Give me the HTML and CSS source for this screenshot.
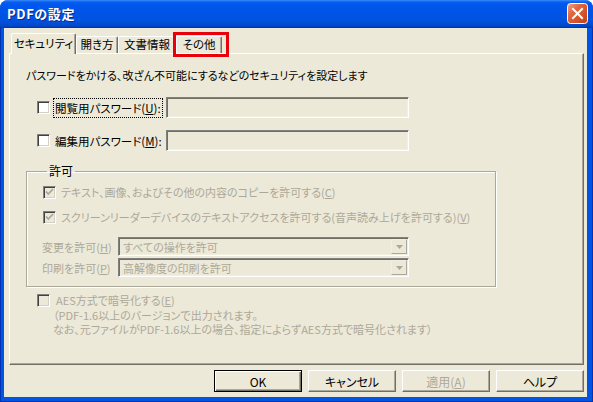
FILE: index.html
```html
<!DOCTYPE html>
<html lang="ja">
<head>
<meta charset="utf-8">
<title>PDFの設定</title>
<link rel="stylesheet" href="styles.css">
</head>
<body>
<div class="window">
  <div class="titlebar">
    <span class="title">PDFの設定</span>
    <span class="close">
      <svg width="21" height="21" viewBox="0 0 21 21">
        <defs>
          <linearGradient id="cg" x1="0" y1="0" x2="1" y2="1">
            <stop offset="0" stop-color="#f0a58c"/>
            <stop offset="0.35" stop-color="#e2663e"/>
            <stop offset="1" stop-color="#c23d16"/>
          </linearGradient>
        </defs>
        <rect x="0.5" y="0.5" width="20" height="20" rx="3" fill="url(#cg)" stroke="#fff"/>
        <path d="M6 6 L15 15 M15 6 L6 15" stroke="#fff" stroke-width="2" stroke-linecap="square"/>
      </svg>
    </span>
  </div>
  <div class="frame">
    <div class="client">
      <div class="tabs">
        <div class="tab sel t1">セキュリティ</div>
        <div class="tab t2">開き方</div>
        <div class="tab t3">文書情報</div>
        <div class="tab t4">その他</div>
      </div>
      <div class="highlight"></div>
      <div class="panel">
        <p class="desc">パスワードをかける、改ざん不可能にするなどのセキュリティを設定します</p>
        <div class="pw-row">
          <span class="cb"></span>
          <span class="pw-label"><span class="focus">閲覧用パスワード(<u>U</u>):</span></span>
          <span class="field"></span>
        </div>
        <div class="pw-row second">
          <span class="cb"></span>
          <span class="pw-label">編集用パスワード(<u>M</u>):</span>
          <span class="field"></span>
        </div>
        <fieldset class="group">
          <legend>許可</legend>
          <div class="cb-row first">
            <span class="cb disabled"><svg width="11" height="11" viewBox="0 0 11 11"><path d="M2 4.5 L4.3 7 L9 2" fill="none" stroke="#aca899" stroke-width="1.8"/></svg></span>
            <span class="dis">テキスト、画像、およびその他の内容のコピーを許可する(<u>C</u>)</span>
          </div>
          <div class="cb-row second">
            <span class="cb disabled"><svg width="11" height="11" viewBox="0 0 11 11"><path d="M2 4.5 L4.3 7 L9 2" fill="none" stroke="#aca899" stroke-width="1.8"/></svg></span>
            <span class="dis">スクリーンリーダーデバイスのテキストアクセスを許可する(音声読み上げを許可する)(<u>V</u>)</span>
          </div>
          <div class="dd-row first">
            <span class="dd-label dis">変更を許可(<u>H</u>)</span>
            <span class="dd"><span class="dd-text">すべての操作を許可</span><span class="dd-btn"><svg width="7" height="4" viewBox="0 0 7 4"><path d="M0 0 H7 L3.5 4 Z" fill="#aca899"/></svg></span></span>
          </div>
          <div class="dd-row second">
            <span class="dd-label dis">印刷を許可(<u>P</u>)</span>
            <span class="dd"><span class="dd-text">高解像度の印刷を許可</span><span class="dd-btn"><svg width="7" height="4" viewBox="0 0 7 4"><path d="M0 0 H7 L3.5 4 Z" fill="#aca899"/></svg></span></span>
          </div>
        </fieldset>
        <div class="cb-row aes">
          <span class="cb disabled"></span>
          <span class="dis">AES方式で暗号化する(<u>E</u>)</span>
        </div>
        <div class="note dis">
          <span class="note-line">（PDF-1.6以上のバージョンで出力されます。</span>
          <span class="note-line">なお、元ファイルがPDF-1.6以上の場合、指定によらずAES方式で暗号化されます）</span>
        </div>
      </div>
      <div class="buttons">
        <span class="btn default">OK</span>
        <span class="btn">キャンセル</span>
        <span class="btn dis">適用(<u>A</u>)</span>
        <span class="btn">ヘルプ</span>
      </div>
    </div>
  </div>
</div>
</body>
</html>
```

FILE: styles.css
```css
html, body {
  margin: 0;
  padding: 0;
  background: #ffffff;
}

body {
  font-family: "Noto Sans CJK JP", "Noto Sans", sans-serif;
  font-size: 11px;
  font-feature-settings: "palt";
  color: #000;
  white-space: nowrap;
}

.window {
  width: 593px;
  height: 402px;
  display: flex;
  flex-direction: column;
  background: #0055e5;
  border-radius: 8px 8px 0 0;
  overflow: hidden;
}

.titlebar {
  height: 28px;
  flex: none;
  box-sizing: border-box;
  display: flex;
  align-items: center;
  justify-content: space-between;
  padding: 0 5px 1px 7px;
  background: linear-gradient(to bottom,
    #3c8cfa 0px, #0a5ff0 2px, #0058ee 4px, #0055e8 10px,
    #0053e2 18px, #004fd8 23px, #0046c8 26px, #0033a0 28px);
}

.title {
  color: #fff;
  font-weight: bold;
  font-size: 13px;
  letter-spacing: 0.6px;
  text-shadow: 1px 1px 0 #0a2a8a;
}

.close {
  width: 21px;
  height: 21px;
  display: block;
}

.close svg {
  display: block;
}

.frame {
  flex: 1;
  display: flex;
  padding: 0 6px 5px 4px;
  background: #0055e5;
  box-shadow: inset 1px 0 #0033b0, inset -1px 0 #0033b0, inset 0 -1px #0033b0;
}

.client {
  flex: 1;
  position: relative;
  display: flex;
  flex-direction: column;
  padding: 5px 3px 0 5px;
  background: #ece9d8;
}

/* tabs */
.tabs {
  display: flex;
  align-items: flex-end;
  height: 20px;
  margin-left: 2px;
  position: relative;
  z-index: 1;
}

.tab {
  height: 17px;
  box-sizing: border-box;
  border-top: 1px solid #fff;
  border-left: 1px solid #fff;
  border-right: 1px solid #716f64;
  box-shadow: inset -1px 0 #aca899;
  border-radius: 2px 2px 0 0;
  text-align: center;
  line-height: 15px;
  font-size: 11.5px;
  background: #ece9d8;
}

.tab.sel {
  height: 21px;
  margin-bottom: -1px;
  line-height: 18px;
}

.t1 { width: 65px; }
.t2 { width: 42px; }
.t3 { width: 58px; }
.t4 { width: 46px; }

.highlight {
  position: absolute;
  left: 169px;
  top: 4px;
  width: 56px;
  height: 25px;
  box-sizing: border-box;
  border: 3px solid #e8000b;
  z-index: 2;
}

/* panel */
.panel {
  width: 575px;
  height: 312px;
  box-sizing: border-box;
  border-top: 1px solid #fff;
  border-left: 1px solid #fff;
  border-right: 1px solid #716f64;
  border-bottom: 1px solid #716f64;
  box-shadow: inset -1px -1px #aca899;
  padding: 14px 0 0 0;
}

.desc {
  margin: 0 0 0 16px;
  line-height: 14px;
}

.pw-row {
  display: flex;
  align-items: center;
  height: 21px;
  margin: 15px 0 0 27px;
}

.pw-row.second {
  margin-top: 12px;
}

.cb {
  width: 13px;
  height: 13px;
  flex: none;
  box-sizing: border-box;
  border: 1px solid;
  border-color: #808080 #fff #fff #808080;
  box-shadow: inset 1px 1px #404040, inset -1px -1px #d4d0c8;
  background: #fff;
  display: flex;
  align-items: center;
  justify-content: center;
}

.cb.disabled {
  background: #ece9d8;
}

.cb svg {
  display: block;
}

.pw-label {
  width: 116px;
  flex: none;
  padding-left: 5px;
  box-sizing: border-box;
  line-height: 14px;
  font-size: 11.5px;
}

.focus {
  outline: 1px dotted #000;
  outline-offset: 1px;
}

.field {
  width: 243px;
  height: 21px;
  box-sizing: border-box;
  border: 1px solid;
  border-color: #808080 #fff #fff #808080;
  box-shadow: inset 1px 1px #716f64, inset -1px -1px #f1efe2;
  background: #ece9d8;
}

.dis {
  color: #aca899;
}

/* group box */
.group {
  margin: 13px 0 0 16px;
  width: 470px;
  box-sizing: border-box;
  padding: 0 0 9px 16px;
  border: 1px solid #aca899;
  box-shadow: inset 1px 1px #fff, 1px 1px #fff;
  min-width: 0;
}

.group legend {
  padding: 0 2px;
  margin-left: 4px;
  line-height: 14px;
  font-size: 12px;
}

.cb-row {
  display: flex;
  align-items: center;
  gap: 5px;
  height: 16px;
  line-height: 14px;
}

.cb-row.first {
  margin-top: 6px;
}

.cb-row.second {
  margin-top: 9px;
}

.dd-row {
  display: flex;
  align-items: center;
  height: 19px;
  margin-left: -1px;
}

.dd-row.first {
  margin-top: 12px;
}

.dd-row.second {
  margin-top: 2px;
}

.dd-label {
  width: 76px;
  flex: none;
  line-height: 14px;
}

.dd {
  width: 291px;
  height: 19px;
  box-sizing: border-box;
  display: flex;
  align-items: center;
  justify-content: space-between;
  border: 1px solid;
  border-color: #808080 #fff #fff #808080;
  box-shadow: inset 1px 1px #716f64, inset -1px -1px #f1efe2;
  background: #ece9d8;
  padding: 0 1px 0 4px;
  color: #aca899;
}

.dd-btn {
  width: 16px;
  height: 15px;
  box-sizing: border-box;
  display: flex;
  align-items: center;
  justify-content: center;
  border: 1px solid;
  border-color: #f1efe2 #aca899 #aca899 #f1efe2;
  background: #ece9d8;
}

.dd-btn svg {
  display: block;
}

.cb-row.aes {
  margin: 6px 0 0 27px;
  gap: 6px;
  height: 14px;
  line-height: 13px;
}

.note {
  margin: 1px 0 0 43px;
  display: flex;
  flex-direction: column;
}

.note-line {
  display: block;
  line-height: 14px;
}

/* buttons */
.buttons {
  display: flex;
  justify-content: flex-end;
  gap: 6px;
  margin-top: 5px;
}

.btn {
  width: 88px;
  height: 22px;
  box-sizing: border-box;
  display: flex;
  align-items: center;
  justify-content: center;
  border: 1px solid;
  border-color: #fff #716f64 #716f64 #fff;
  box-shadow: inset -1px -1px #aca899;
  background: #ece9d8;
  font-size: 12px;
}

.btn.default {
  border: 1px solid #000;
  box-shadow: inset 1px 1px #fff, inset -1px -1px #716f64, inset -2px -2px #aca899;
}
```
